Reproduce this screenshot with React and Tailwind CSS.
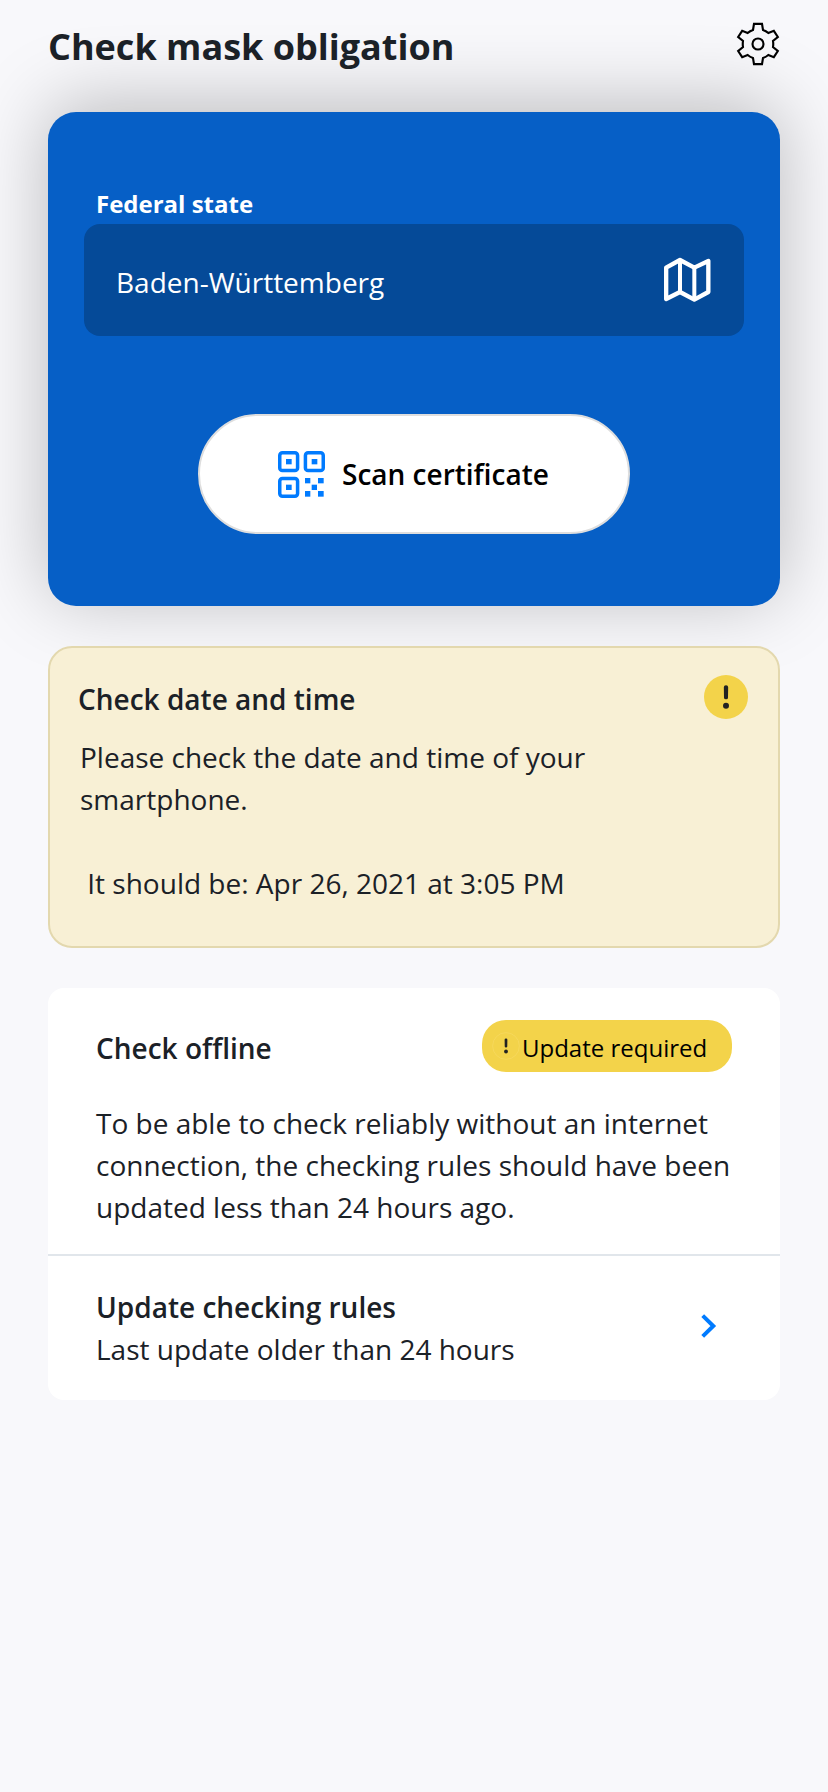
function GearIcon() {
  return (
    <svg className="block h-11 w-11" viewBox="-66 -66 132 132" fill="none" stroke="#000" strokeWidth="6.4" strokeLinejoin="miter">
      <path d="M-15 -42 L-12 -60.5 H12 L15 -42 Q24 -39 31 -33 L47.500 -39.500 L59.500 -21 L45 -9.5 Q46.500 0 45 9.5 L59.500 21 L47.500 39.500 L31 33 Q24 39 15 42 L12 60.5 H-12 L-15 42 Q-24 39 -31 33 L-47.500 39.500 L-59.500 21 L-45 9.5 Q-46.500 0 -45 -9.5 L-59.500 -21 L-47.500 -39.500 L-31 -33 Q-24 -39 -15 -42 Z" />
      <circle r="16.5" />
    </svg>
  );
}

function MapIcon() {
  return (
    <svg className="block h-[46px] w-12" viewBox="129 141 144 138" fill="none" stroke="#fff" strokeWidth="13" strokeLinejoin="round">
      <path d="M138.500 173 L180 150 L223 173 L265 153 V246 L223 269 L180 246 L138.500 267 Z" />
      <path d="M180 150 V246 M223 173 V269" strokeWidth="12" />
    </svg>
  );
}

function QrIcon() {
  return (
    <svg className="block h-[47px] w-[47px]" viewBox="0 0 141 141" fill="#007bff">
      <g fill="none" stroke="#007bff" strokeWidth="10.5">
        <rect x="5.250" y="5.250" width="53.500" height="53.500" rx="8" />
        <rect x="82.250" y="5.250" width="53.500" height="53.500" rx="8" />
        <rect x="5.250" y="82.250" width="53.500" height="53.500" rx="8" />
      </g>
      <rect x="24" y="24" width="17" height="16" />
      <rect x="101" y="24" width="17" height="16" />
      <rect x="24" y="101" width="17" height="16" />
      <rect x="81" y="81" width="16" height="16" />
      <rect x="120" y="81" width="17" height="16" />
      <rect x="101" y="101" width="16" height="16" />
      <rect x="81" y="120" width="16" height="17" />
      <rect x="120" y="120" width="17" height="17" />
    </svg>
  );
}

function AlertIcon({ className, ring }) {
  return (
    <svg className={className} viewBox="-66 -66 132 132" fill="#222">
      <circle r={ring ? 63 : 66} fill="#f3d34a" stroke={ring ? "#f7db66" : "none"} strokeWidth="3" />
      <path d="M-6.500 -29 Q-6.500 -35 0 -35 Q6.500 -35 6.500 -29 L6 2 Q6 7 0 7 Q-6 7 -6 2 Z" />
      <circle cy="26" r="9" />
    </svg>
  );
}

function ChevronIcon() {
  return (
    <svg className="block h-6 w-4" viewBox="0 0 16 24" fill="none" stroke="#007bff" strokeWidth="4">
      <path d="M1.700 1.600 L12.300 12 L1.700 22.400" />
    </svg>
  );
}

export default function App() {
  return (
    <main className="flex h-[1792px] w-[828px] flex-col overflow-hidden bg-[#f8f8fb] px-12 font-['Open_Sans',sans-serif] text-[28px] leading-[42px] text-[#1b2127]">
      <header className="relative z-10 flex h-28 shrink-0 justify-between">
        <h1 className="pt-5 text-4xl leading-[54px] font-bold">Check mask obligation</h1>
        <button className="mt-[22px] h-11 w-11" aria-label="Settings">
          <GearIcon />
        </button>
      </header>

      <section className="flex h-[494px] shrink-0 flex-col rounded-[28px] bg-[#065fc6] px-9 pt-[76px] text-white shadow-[0_-8px_76px_rgba(0,0,0,0.25)]">
        <p className="h-9 pl-3 text-2xl leading-8 font-bold">Federal state</p>
        <button className="flex h-28 shrink-0 items-center justify-between rounded-2xl bg-[#054a98] pr-[33px] pl-8">
          <span className="pt-[4px]">Baden-Württemberg</span>
          <MapIcon />
        </button>
        <button className="mt-[78px] flex h-[120px] w-[432px] shrink-0 items-center gap-[17px] self-center rounded-[60px] border-2 border-[#dedede] bg-white pl-[78px] font-semibold text-black">
          <QrIcon />
          <span className="-mt-px">Scan certificate</span>
        </button>
      </section>

      <section className="relative mt-10 h-[302px] shrink-0 rounded-3xl border-2 border-[#e3d8ae] bg-[#f8f0d5] px-7 pt-[30px]">
        <div className="flex h-[58px] justify-between">
          <h2 className="font-semibold">Check date and time</h2>
          <AlertIcon className="-mt-[3px] mr-0.5 h-11 w-11" />
        </div>
        <p className="w-[600px] pl-0.5">Please check the date and time of your smartphone.</p>
        <p className="mt-[42px] pl-0.5 whitespace-pre"> It should be: Apr 26, 2021 at 3:05 PM</p>
      </section>

      <section className="mt-10 h-[412px] shrink-0 rounded-2xl bg-white">
        <div className="h-[268px] border-b-2 border-[#e1e6eb] px-12 pt-8">
          <div className="flex h-[82px] justify-between">
            <h2 className="pt-[7px] font-semibold">Check offline</h2>
            <div className="flex h-[52px] w-[250px] rounded-3xl bg-[#f3d34a] pl-2.5 text-2xl leading-[56px] text-black">
              <AlertIcon ring className="mt-3 mr-0.5 h-7 w-7" />
              Update required
            </div>
          </div>
          <p className="-mr-8">
            To be able to check reliably without an internet
            <br />
            connection, the checking rules should have been
            <br />
            updated less than 24 hours ago.
          </p>
        </div>
        <button className="flex w-full justify-between pt-[30px] pr-[63px] pl-12 text-left">
          <span>
            <strong className="block font-semibold">Update checking rules</strong>
            Last update older than 24 hours
          </span>
          <span className="pt-7">
            <ChevronIcon />
          </span>
        </button>
      </section>
    </main>
  );
}
